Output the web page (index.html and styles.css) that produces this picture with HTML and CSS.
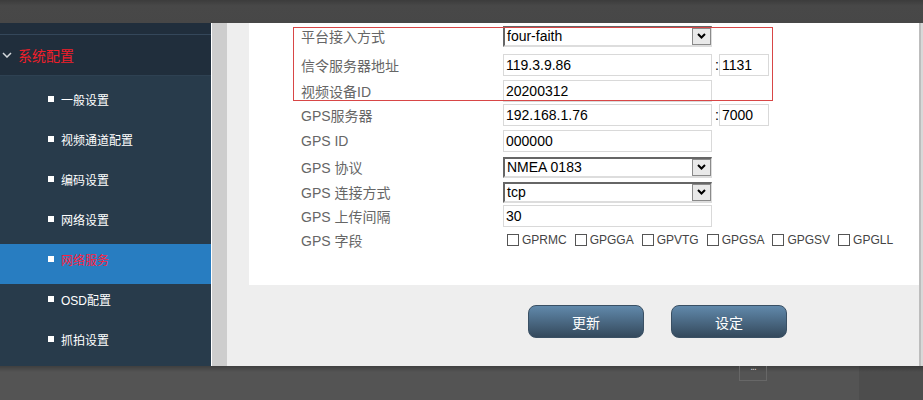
FILE: index.html
```html
<!DOCTYPE html>
<html lang="zh-CN">
<head>
    <meta charset="UTF-8">
    <title>网络服务</title>
    <link rel="stylesheet" href="styles.css">
</head>
<body>
    <div class="topbar"></div>
    <div class="main">
        <aside class="sidebar">
            <div class="menu-head">
                <svg width="10" height="6" viewBox="0 0 10 6"><path d="M1 1L5 5L9 1" stroke="#d4d8dc" stroke-width="1.5" fill="none"/></svg>
                <span>系统配置</span>
            </div>
            <ul class="submenu">
                <li><i></i>一般设置</li>
                <li><i></i>视频通道配置</li>
                <li><i></i>编码设置</li>
                <li><i></i>网络设置</li>
                <li class="active"><i></i>网络服务</li>
                <li><i></i>OSD配置</li>
                <li><i></i>抓拍设置</li>
            </ul>
        </aside>
        <div class="gutter"></div>
        <div class="content">
            <div class="panel">
                <div class="highlight"></div>
                <div class="form">
                    <div class="row">
                        <label>平台接入方式</label>
                        <div class="select"><span>four-faith</span><b><svg width="9" height="6" viewBox="0 0 9 6"><path d="M1 1l3.5 3.5L8 1" stroke="#000" stroke-width="2" fill="none"/></svg></b></div>
                    </div>
                    <div class="row">
                        <label>信令服务器地址</label>
                        <input class="field" value="119.3.9.86"><span class="colon">:</span><input class="field port" value="1131">
                    </div>
                    <div class="row">
                        <label>视频设备ID</label>
                        <input class="field" value="20200312">
                    </div>
                    <div class="row">
                        <label>GPS服务器</label>
                        <input class="field" value="192.168.1.76"><span class="colon">:</span><input class="field port" value="7000">
                    </div>
                    <div class="row">
                        <label>GPS ID</label>
                        <input class="field" value="000000">
                    </div>
                    <div class="row">
                        <label>GPS 协议</label>
                        <div class="select"><span>NMEA 0183</span><b><svg width="9" height="6" viewBox="0 0 9 6"><path d="M1 1l3.5 3.5L8 1" stroke="#000" stroke-width="2" fill="none"/></svg></b></div>
                    </div>
                    <div class="row">
                        <label>GPS 连接方式</label>
                        <div class="select"><span>tcp</span><b><svg width="9" height="6" viewBox="0 0 9 6"><path d="M1 1l3.5 3.5L8 1" stroke="#000" stroke-width="2" fill="none"/></svg></b></div>
                    </div>
                    <div class="row">
                        <label>GPS 上传间隔</label>
                        <input class="field" value="30">
                    </div>
                    <div class="row">
                        <label>GPS 字段</label>
                        <div class="checks">
                            <span class="chk"><i></i>GPRMC</span>
                            <span class="chk"><i></i>GPGGA</span>
                            <span class="chk"><i></i>GPVTG</span>
                            <span class="chk"><i></i>GPGSA</span>
                            <span class="chk"><i></i>GPGSV</span>
                            <span class="chk"><i></i>GPGLL</span>
                        </div>
                    </div>
                </div>
            </div>
            <div class="actions">
                <button class="btn">更新</button>
                <button class="btn">设定</button>
            </div>
        </div>
        <div class="edge"></div>
    </div>
    <div class="footer">
        <div class="tab">...</div>
    </div>
</body>
</html>
```

FILE: styles.css
```css
body {
    margin: 0;
    background: #535353;
    font-family: "Liberation Sans", "Noto Sans CJK SC", sans-serif;
    overflow: hidden;
}
.topbar {
    height: 23px;
    background: linear-gradient(#3c3c3c, #484848 25%, #474747);
}
.main {
    display: flex;
    height: 343px;
}
.sidebar {
    width: 211px;
    border-right: 1px solid #fff;
    background: #202e3c;
    padding-top: 11px;
    display: flex;
    flex-direction: column;
    box-sizing: content-box;
}
.menu-head {
    height: 40px;
    border-top: 1px solid #34475a;
    border-bottom: 1px solid #2e4152;
    display: flex;
    align-items: center;
    padding-left: 2px;
    gap: 6px;
    color: #f01e2a;
    font-size: 14px;
}
.submenu {
    list-style: none;
    margin: 0;
    padding: 8px 0 0 0;
    flex: 1;
    background: #283b4b;
}
.submenu li {
    height: 30px;
    padding-bottom: 10px;
    padding-left: 48px;
    display: flex;
    align-items: center;
    color: #fff;
    font-size: 12px;
}
.submenu li i {
    width: 6px;
    height: 6px;
    background: #fff;
    margin-right: 7px;
}
.submenu li.active {
    background: #287dc1;
    color: #ff1f3d;
}
.gutter {
    width: 15px;
    background: #cdcdcd;
}
.content {
    flex: 1;
    background: #eee;
    padding-left: 22px;
    display: flex;
    flex-direction: column;
}
.edge {
    width: 2px;
    border-left: 2px solid #bdbdbd;
    background: #d8d8d8;
}
.panel {
    height: 262px;
    background: #fff;
    position: relative;
}
.highlight {
    position: absolute;
    left: 44px;
    top: 4px;
    width: 480px;
    height: 74px;
    border: 1px solid #d84646;
    box-sizing: border-box;
    pointer-events: none;
}
.form {
    padding-left: 52px;
}
.row {
    display: flex;
    align-items: center;
    height: 25px;
    font-size: 14px;
}
.row:nth-child(1) { height: 26px; }
.row:nth-child(2) { height: 32px; }
.row:nth-child(3) { height: 20px; }
.row:nth-child(4) { height: 28px; }
.row:nth-child(5) { height: 24px; }
.row:nth-child(6) { height: 28px; }
.row:nth-child(7) { height: 22px; }
.row:nth-child(9) { height: 24px; }
.row label {
    width: 202px;
    flex-shrink: 0;
    color: #666;
}
.field {
    width: 209px;
    height: 22px;
    box-sizing: border-box;
    border: 1px solid #d9d9d9;
    padding: 0 2px;
    margin: 0;
    font: 14px "Liberation Sans", sans-serif;
    color: #000;
    outline: none;
}
.field.port {
    width: 50px;
}
.colon {
    margin-left: 3px;
    width: 4px;
    color: #000;
}
.select {
    width: 209px;
    height: 21px;
    box-sizing: border-box;
    border-style: solid;
    border-width: 2px 1px 2px 2px;
    border-color: #666 #ddd #ddd #666;
    display: flex;
    align-items: center;
    background: #fff;
    color: #000;
}
.select span {
    flex: 1;
    padding-left: 2px;
}
.select b {
    width: 19px;
    height: 17px;
    box-sizing: border-box;
    border: 1px solid #8a8a8a;
    background: #e9e9e9;
    display: flex;
    align-items: center;
    justify-content: center;
}
.checks {
    display: flex;
    align-items: center;
    font-size: 12px;
    color: #444;
}
.chk {
    display: inline-flex;
    align-items: center;
    margin-right: 4px;
}
.chk i {
    width: 12px;
    height: 12px;
    box-sizing: border-box;
    border: 1px solid #555;
    background: #fff;
    margin: 0 3px 0 4px;
}
.actions {
    display: flex;
    gap: 27px;
    padding: 20px 0 0 279px;
}
.btn {
    width: 116px;
    height: 33px;
    border: 1px solid #3a5064;
    border-radius: 8px;
    background: linear-gradient(#6189ab, #34495c);
    color: #fff;
    font: 14px "Liberation Sans", "Noto Sans CJK SC", sans-serif;
    cursor: pointer;
}
.footer {
    height: 34px;
    background: linear-gradient(rgba(0,0,0,0.25), rgba(0,0,0,0) 6px),
                linear-gradient(to right, #545454 859px, #4d4d4d 859px);
}
.tab {
    margin-left: 739px;
    width: 28px;
    height: 15px;
    box-sizing: border-box;
    border: 1px solid #676767;
    border-top: none;
    color: #cfcfcf;
    font-size: 10px;
    line-height: 2px;
    text-align: center;
    letter-spacing: -1px;
}
```
